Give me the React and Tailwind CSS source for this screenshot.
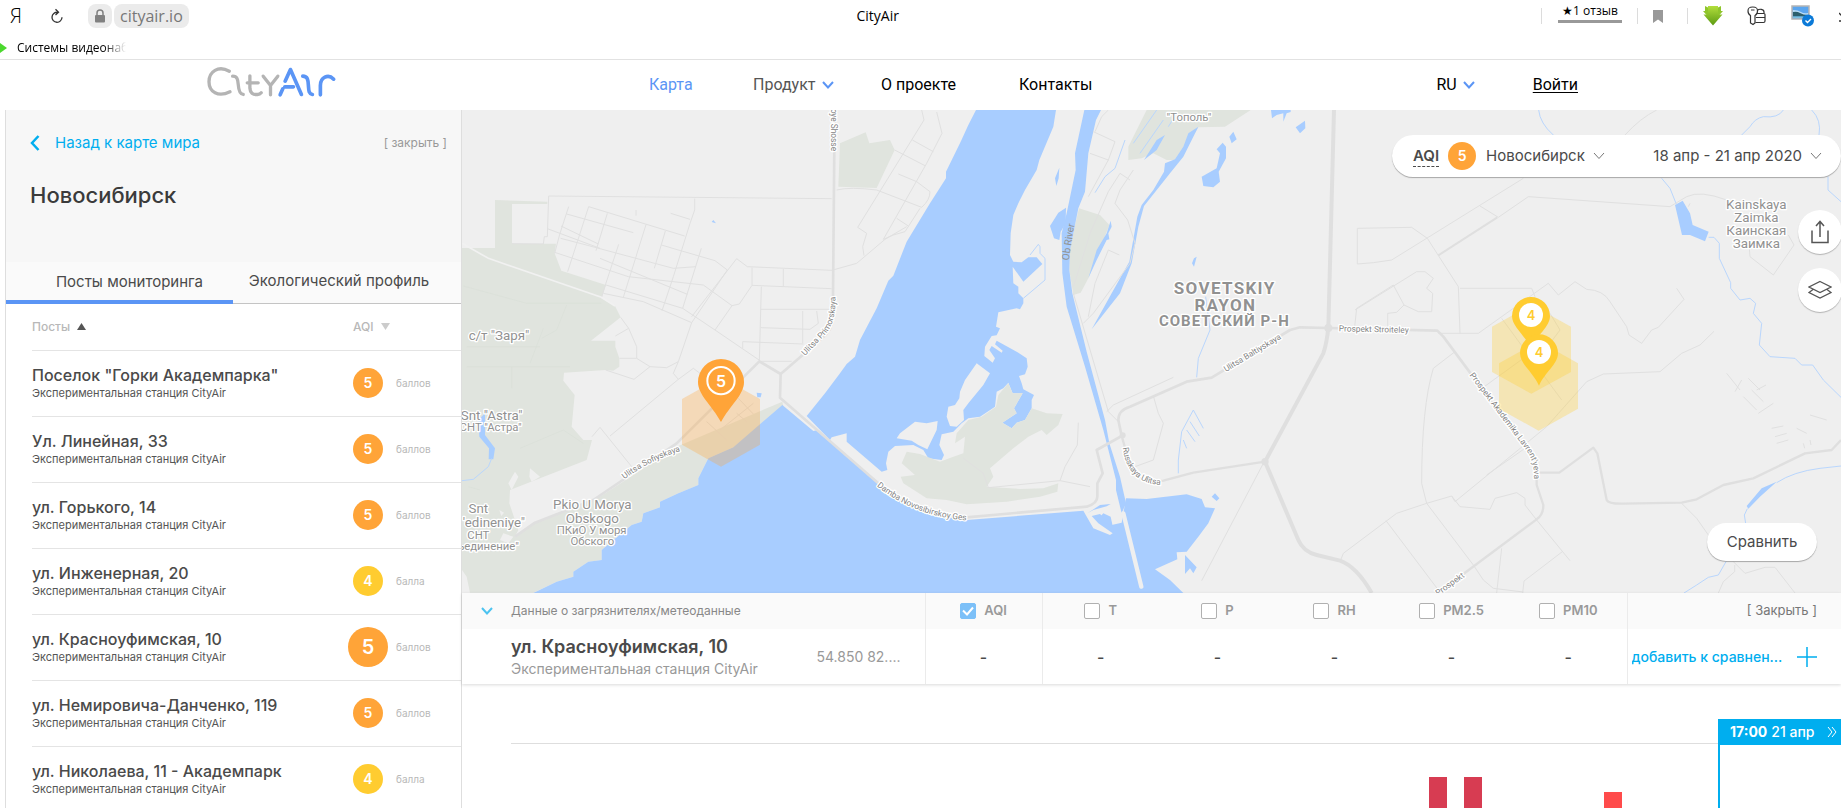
import React from 'react';
import clsx from 'clsx';

const posts = [
  { name: 'Поселок "Горки Академпарка"', aqi: 5 },
  { name: 'Ул. Линейная, 33', aqi: 5 },
  { name: 'ул. Горького, 14', aqi: 5 },
  { name: 'ул. Инженерная, 20', aqi: 4 },
  { name: 'ул. Красноуфимская, 10', aqi: 5, selected: true },
  { name: 'ул. Немировича-Данченко, 119', aqi: 5 },
  { name: 'ул. Николаева, 11 - Академпарк', aqi: 4 },
];

const params = [
  { id: 'aqi', label: 'AQI', checked: true },
  { id: 't', label: 'T' },
  { id: 'p', label: 'P' },
  { id: 'rh', label: 'RH' },
  { id: 'pm25', label: 'PM2.5' },
  { id: 'pm10', label: 'PM10' },
];

// 0 = no data
const bars = [
  { h: 31, color: '#d73c52' },
  { h: 31, color: '#d73c52' },
  { h: 0 },
  { h: 0 },
  { h: 0 },
  { h: 16, color: '#ff4b4b' },
  { h: 0 },
  { h: 0 },
];

const streetLabels = [
  { id: 'primorskaya', text: 'Ulitsa Primorskaya', d: 'M1035 768L1090 710Q1130 670 1126 590' },
  { id: 'damba', text: 'Damba Novosibirskoy Ges', d: 'M1250 1158Q1370 1255 1540 1262' },
  { id: 'russkaya', text: 'Russkaya Ulitsa', d: 'M1988 1043Q2004 1160 2120 1154' },
  { id: 'lavrentyeva', text: "Prospekt Akademika Lavrent'yeva", d: 'M3028 826L3195 1046Q3225 1080 3222 1140' },
  { id: 'sofiyskaya', text: 'Ulitsa Sofiyskaya', d: 'M494 1138Q560 1085 660 1054' },
  { id: 'baltiyskaya', text: 'Ulitsa Baltiyskaya', d: 'M2298 816L2480 706' },
  { id: 'stroiteley', text: 'Prospekt Stroiteley', d: 'M2636 694L2860 699' },
  { id: 'prospekt', text: 'Prospekt', d: 'M2934 1488L3040 1412' },
  { id: 'shosse', text: 'oye Shosse', d: 'M1112 26V180' },
];

function Chevron({ className }) {
  return (
    <svg viewBox="0 0 12 8" className={className} fill="none" stroke="currentColor">
      <path d="M1 1l5 5.5L11 1" />
    </svg>
  );
}

function AqiBadge({ value, className }) {
  return (
    <span
      className={clsx(
        'flex items-center justify-center rounded-full font-semibold text-white',
        value === 5 ? 'bg-[#ffa438]' : 'bg-[#ffcc30]',
        className
      )}
    >
      {value}
    </span>
  );
}

function BrowserBar() {
  return (
    <div className="h-[60px] overflow-hidden border-b border-[#e2e2e2] bg-white font-['Open_Sans',sans-serif]">
      <div className="grid h-8 grid-cols-[10fr_auto_11fr] items-center">
        <div className="flex items-center pl-[10px]">
          <span className="w-10 text-xl leading-6 font-light text-black">Я</span>
          <button aria-label="Обновить" className="mr-6">
            <svg viewBox="0 0 14 16" className="h-4 w-[14px]" fill="none" stroke="#333" strokeWidth="1.3">
              <path d="M7.500 4.300A5 5 0 1 0 12 9.300M5.500 1.200L8.500 4.300 5.500 7" />
            </svg>
          </button>
          <span className="flex h-6 w-6 items-center justify-center rounded-lg bg-[#ebebeb]">
            <svg viewBox="0 0 12 14" className="h-[14px] w-3">
              <rect x="1" y="6" width="10" height="7.5" rx="1" fill="#808080" />
              <path d="M3 6.5V4a3 3 0 0 1 6 0v2.500" fill="none" stroke="#808080" strokeWidth="1.5" />
            </svg>
          </span>
          <span className="ml-[2px] h-6 rounded-lg bg-[#ebebeb] px-[6px] text-base leading-6 text-[#777]">cityair.io</span>
        </div>
        <span className="text-sm text-black">CityAir</span>
        <div className="-mr-3 flex items-center justify-end">
          <span className="mr-4 h-4 w-px bg-[#dcdcdc]" />
          <a href="#reviews" className="-mt-2 w-16 border-b-[3px] border-[#999] text-center text-xs leading-[18px] text-black">
            ★1 отзыв
          </a>
          <span className="mx-[15px] h-4 w-px bg-[#dcdcdc]" />
          <button aria-label="Закладка">
            <svg viewBox="0 0 10 13" className="h-[13px] w-[10px]">
              <path d="M0 0h10v13L5 9.500 0 13z" fill="#999" />
            </svg>
          </button>
          <span className="mr-[15px] ml-[24px] h-4 w-px bg-[#dcdcdc]" />
          <button aria-label="Загрузки">
            <svg viewBox="0 0 20 20" className="h-5 w-5">
              <defs>
                <linearGradient id="arrow" x1="0" y1="0" x2="0" y2="1">
                  <stop offset="0" stopColor="#b2de3c" />
                  <stop offset="1" stopColor="#5c9a12" />
                </linearGradient>
              </defs>
              <path d="M2 0L5 1.500V0h10v1.500L18 0v5h2l-4 4.500H4L0 5h2z" fill="#8fc52b" />
              <path d="M5 0h10v8.500h4.500L10 19.500.5 8.500H5z" fill="url(#arrow)" />
            </svg>
          </button>
          <button aria-label="Пароли" className="ml-6">
            <svg viewBox="0 0 20 20" className="h-5 w-5" fill="none" stroke="#333" strokeWidth="1.2">
              <path d="M3.500 9.500C1.500 8.500 1 7 1 5c0-3 1-4 4.800-4s4.700 1 4.700 4c0 2-.5 3.500-2.500 4.500V17l-2 1.500-2.500-1.500zM4 4h3.500" />
              <path d="M10.500 4.500c1.500-2 6.500-1.500 6.500 1.500v1.500M9.500 7.500H17q1 0 1 1V15q0 1.500-1.500 1.500H8.500M9 11.500h9" />
            </svg>
          </button>
          <button aria-label="Снимки" className="ml-6">
            <svg viewBox="0 0 24 22" className="h-[22px] w-6">
              <rect x="1" y="1" width="17" height="13" fill="#5aa5ee" stroke="#b5b5b5" strokeWidth="1.500" />
              <path d="M2 5q5 0 8 2t7 1v3H2z" fill="#b9dcf7" />
              <path d="M2 7q4-1 7 1t8 2v1.500H2z" fill="#2d5f6c" />
              <path d="M2 11.500h15V13H2z" fill="#7cc0de" />
              <circle cx="17" cy="15.500" r="6" fill="#0b7ad8" />
              <path d="M14.500 15.500l2 2 3.500-3.500" fill="none" stroke="#fff" strokeWidth="1.400" />
            </svg>
          </button>
          <button aria-label="Ещё" className="ml-6">
            <svg viewBox="0 0 14 12" className="h-3 w-[14px]" fill="none" stroke="#333" strokeWidth="1.300">
              <path d="M0 3l5 5M0 11h14" />
            </svg>
          </button>
        </div>
      </div>
      <div className="flex items-center gap-[10px]">
        <svg viewBox="0 0 7 10" className="h-[10px] w-[7px]">
          <path d="M0 0l7 5-7 5z" fill="#4bd82e" />
        </svg>
        <a
          href="#bookmark"
          className="w-[109px] overflow-hidden bg-linear-to-r from-black from-80% to-transparent bg-clip-text text-xs leading-8 whitespace-nowrap text-transparent"
        >
          Системы видеонаб
        </a>
      </div>
    </div>
  );
}

function Logo() {
  return (
    <svg viewBox="618 195 394 98" className="h-[33px] w-[131px]" fill="none" strokeWidth="10" strokeLinecap="round" strokeLinejoin="round">
      <g stroke="#b4b4b4">
        <path d="M688 213C655 195 627 214 627 245S655 292 690 275" />
        <path d="M698 228C712 228 714 238 715 253S718 282 730 283" />
        <path d="M750 227V264Q751 285 773 283Q780 283 784 278M742 248H775" />
        <path d="M790 228L812 256L834 228M812 256V284" />
      </g>
      <g stroke="#5b95f5" strokeWidth="11">
        <path d="M856 243L872 208L905 283M855 260H881M841 284L849 266" />
        <path d="M909 228C924 228 925 240 926 256S927 281 938 283" />
        <path d="M962 284V256C962 232 985 219 1002 237" />
      </g>
    </svg>
  );
}

function Header() {
  return (
    <header className="flex h-[50px] items-center bg-white pr-[263px] pl-[206px] font-[Roboto,sans-serif] text-base text-black">
      <a href="#home" aria-label="CityAir" className="-mt-2 shrink-0">
        <Logo />
      </a>
      <nav className="ml-[312px] flex items-center whitespace-nowrap">
        <a href="#map" className="w-[104px] text-[#5b95f5]">Карта</a>
        <a href="#product" className="flex w-32 items-center gap-[6px] text-[#555]">
          Продукт <Chevron className="h-2 w-3 stroke-2 text-[#5b95f5]" />
        </a>
        <a href="#about" className="w-[138px]">О проекте</a>
        <a href="#contacts">Контакты</a>
      </nav>
      <button className="mr-[58px] ml-auto flex items-center gap-[6px]">
        RU <Chevron className="h-2 w-3 stroke-2 text-[#5b95f5]" />
      </button>
      <a href="#login" className="underline underline-offset-2">Войти</a>
    </header>
  );
}

function Sidebar() {
  return (
    <aside className="ml-[5px] w-[457px] shrink-0 border-x border-[#dedede] bg-white">
      <div className="h-[152px] bg-[#f7f7f7] px-6 pt-[21px]">
        <div className="flex items-center">
          <a href="#world" className="flex items-center gap-[15px] text-[15px] leading-6 text-[#00aeef]">
            <svg viewBox="0 0 10 16" className="h-4 w-[10px]" fill="none" stroke="currentColor" strokeWidth="2.500">
              <path d="M8.500 1L2 8l6.500 7" />
            </svg>
            Назад к карте мира
          </a>
          <button className="mr-[-10px] ml-auto text-xs text-[#999]">[ закрыть ]</button>
        </div>
        <h1 className="mt-6 text-[22px] leading-8 font-medium text-[#3b3b3b]">Новосибирск</h1>
      </div>
      <div className="flex h-[42px] border-b border-[#c4c4c4] bg-[#fafafa] text-[15px] text-[#4a4a4a]">
        <button className="-mb-px w-[227px] border-b-4 border-[#5b95f5] pt-[2px] pl-5">Посты мониторинга</button>
        <button className="flex-1 pr-4 pb-[2px]">Экологический профиль</button>
      </div>
      <table className="ml-[26px] w-[429px] table-fixed border-collapse">
        <colgroup>
          <col className="w-[311px]" />
          <col className="w-[50px]" />
          <col />
        </colgroup>
        <thead>
          <tr className="h-[46px] border-b border-[#e4e4e4] text-left text-xs text-[#b8b8b8]">
            <th className="font-medium">
              <button className="flex items-center gap-[7px]">
                Посты
                <svg viewBox="0 0 9 7" className="h-[7px] w-[9px]"><path d="M4.500 0L9 7H0z" fill="#555" /></svg>
              </button>
            </th>
            <th colSpan={2} className="pl-[10px] font-medium">
              <button className="flex items-center gap-[7px]">
                AQI
                <svg viewBox="0 0 9 7" className="h-[7px] w-[9px]"><path d="M0 0h9L4.500 7z" fill="#ccc" /></svg>
              </button>
            </th>
          </tr>
        </thead>
        <tbody>
          {posts.map(p => (
            <tr key={p.name} className="h-[66px] border-b border-[#e4e4e4] whitespace-nowrap">
              <td>
                <div className="text-base leading-5 font-medium text-[#4a4a4a]">{p.name}</div>
                <div className="text-[11px] leading-4 text-[#555]">Экспериментальная станция CityAir</div>
              </td>
              <td>
                <AqiBadge value={p.aqi} className={clsx('mx-auto', p.selected ? 'size-10 text-xl' : 'size-[30px] text-sm')} />
              </td>
              <td className="pl-[3px] text-[10px] text-[#b8b8b8]">{p.aqi === 5 ? 'баллов' : 'балла'}</td>
            </tr>
          ))}
        </tbody>
      </table>
    </aside>
  );
}

function MapCanvas() {
  return (
    <svg viewBox="6 30 4137 1449" preserveAspectRatio="xMidYMid slice" className="block h-full w-full" fill="none">
      <defs>
        {streetLabels.map(l => (
          <path key={l.id} id={l.id} d={l.d} />
        ))}
      </defs>
      <rect x="0" y="0" width="4200" height="1500" fill="#efefef" />

      {/* forests */}
      <g fill="#e0e4de">
        <path d="M10 444H105V300L262 305V312H156V431H288L284 460L304 512L438 555L424 595L465 618L482 652L393 722H466V740L478 775V800L460 812L437 810L312 818L310 842L344 885L335 980L370 1020L396 1020L380 1080L150 1170L148 1210L175 1290L165 1310L225 1268L420 1190L650 1040L967 905L970 920L820 1042L745 1075L715 1135L715 1155L655 1180L600 1205L600 1222L550 1240L545 1265L515 1275L460 1320L425 1350V1380L385 1385L340 1415V1430L290 1445L220 1478H30L20 1430L6 1410V444Z" />
        <path d="M1140 130L1217 97L1228 130L1290 120L1304 150L1250 264L1135 260Z" />
      </g>
      <g transform="translate(1140 0)" fill="#e0e4de">
        <path d="M920 30H1232L1155 80L1075 82L1040 140L1005 180H980L940 160L905 175L865 180V140Z" />
        <path d="M717 325L780 345L808 375L745 535L722 578L700 585L688 510L690 440Z" />
      </g>
      <g fill="#efefef">
        <path d="M165 1115L175 1130L155 1170L145 1150ZM210 1105L240 1130L215 1145L208 1130Z" />
        <path d="M130 1300L160 1310L145 1330L120 1320ZM118 1230L132 1238L124 1248Z" />
      </g>

      {/* water */}
      <g transform="translate(1140 0)" fill="#a8cdff">
        <path d="M408 30L385 75L362 125L318 215V235L270 310L200 425L160 527L145 542L110 625L60 720L45 770L20 792L0 820L-45 880L-100 948L-30 1020L-25 1012L20 1000L20 1025L125 1115L142 1110L138 1090L145 1055L165 1038L220 1035L250 1050L265 1075L305 1080L312 1065L298 1035L305 1003L340 995L365 970L385 955L420 950L465 920L470 875L490 865L505 848L518 880L548 880L522 925L530 940L487 968L515 985L530 968L555 960L575 925V900L582 885L550 868L545 850L537 828L555 823L563 800L560 775L535 758L470 722L465 733L488 752L485 758L455 738L448 750L465 775L458 788L433 768L435 740L455 708L470 706L480 685L468 680L475 637L530 625L540 628L550 610V595L535 580V560L520 550L518 500L550 545L607 492L590 472H565L545 487L520 485L510 465L512 400L520 345L535 310L555 270L590 210L598 180L640 80L648 30Z" />
        <path d="M-173 915L-80 993L-65 990L115 1150L190 1210L270 1245L380 1260L730 1232L760 1285L810 1305L818 1300L775 1270L755 1248L780 1242L815 1275L845 1268L858 1195L920 1197L1040 1183L1085 1197L1095 1222L1125 1225L1105 1270L1075 1310L1040 1355L1010 1357L1012 1378L945 1408L990 1440L1030 1479H-920L-850 1445L-800 1430L-800 1415L-755 1385L-715 1380V1350L-680 1320L-625 1275L-595 1265L-590 1240L-540 1222V1205L-485 1180L-425 1155V1135L-395 1075L-320 1042Z" />
        <path d="M733 30L705 160L707 210L680 340L665 400L667 520L680 620L735 800L790 990L828 1140V1170L845 1240L858 1210L840 1130L808 1030L795 960L740 755L697 580L688 510L690 450L715 325L735 275L745 160L768 60L783 30Z" />
        <path d="M678 323L655 338L630 378L642 415L658 420L662 395L677 370ZM658 203L645 235L649 258L656 235Z" />
        <path d="M1075 80L1045 100L1030 140L1005 178L975 190L972 215L940 270L905 315L892 350L868 485L815 580L755 688L840 580L875 490L895 380L912 318L990 220L1030 170Z" />
        <path d="M1158 140L1148 128L1130 148L1140 160L1130 205L1085 230L1090 258L1120 262L1140 245L1136 215L1158 175Z" />
        <path d="M1180 95L1168 110L1175 130L1190 118ZM1395 62L1367 82L1380 100L1396 85ZM1293 30L1296 55L1310 45L1330 40V65L1340 40L1352 36V30Z" />
        <path d="M812 362L800 400L770 450L745 535L770 480L800 420L808 418L805 400L815 380ZM1062 475L1056 490L1062 500L1070 470Z" />
        <path d="M950 120L975 105L950 150L912 180ZM1035 1365L1070 1402L1060 1420L1050 1405L1035 1422ZM1125 1180L1138 1195L1130 1203L1115 1190Z" />
        <path d="M742 1240L780 1215L812 1212L800 1219L760 1230ZM772 1260L790 1240L812 1250L818 1278Z" />
      </g>
      <path d="M55 960L75 940L75 1005L105 1045L100 1078H86L87 1045L58 1010Z" fill="#a8cdff" />
      <path d="M890 878L905 880L902 892H892ZM755 366L760 360L768 370Z" fill="#a8cdff" />
      <path d="M3645 315L3668 302L3690 340L3698 375L3746 395L3735 424L3690 405L3666 405ZM3860 1218L3905 1165L3950 1145L3900 1190L3865 1226Z" fill="#a8cdff" />
      <g stroke="#b9d6fd" strokeWidth="3">
        <path d="M6 1142L40 1138L85 1100L95 1075" />
        <path d="M3236 30Q3240 70 3280 105M3970 30Q3955 55 3910 50Q3885 55 3870 80L3845 105M4055 30Q4085 60 4077 105M4104 230V270L4143 305M3605 235L3630 265L3650 315M3746 412L3762 412L3778 430V475L3812 548V565L3840 600L3870 595L3887 610L3880 640L3905 670L3898 735L3930 770L4005 775L4025 795H4058L4090 840L4143 892" />
        <path d="M4143 1098L4080 1105Q4000 1115 3950 1148M3862 1226L3853 1245L3857 1270M3798 1385L3775 1425L3745 1432L3710 1455L3672 1479" />
        <path d="M2237 590L2250 690L2215 775L2210 832M2155 1120V1080L2165 995L2200 930L2230 985M2170 1020L2180 1045M2180 990L2205 1025M2190 965L2218 1008M1690 595L1755 540V475L1740 460V440L1735 433L1710 465M2090 30L2020 130M2110 60L2040 160M2150 40L2125 80M1995 120L1965 205L1935 230L1905 278" />
      </g>

      {/* islands */}
      <g transform="translate(1140 0)">
        <g fill="#efefef">
          <path d="M410 790L450 820L430 855L385 910L370 930L372 960L350 980L330 978L320 950L325 920L345 915L358 895L360 875L375 840Z" />
          <path d="M225 965L260 970L293 963L290 990L262 1048L235 1035L215 1022L170 1015L180 1000Z" />
        </g>
        <path d="M505 850L518 880L548 880L522 925L530 940L487 968L515 985L530 968L555 960L575 925L620 940L668 942L655 975L620 1005L605 990L565 1010L520 1045L450 1105L460 1130L440 1160L540 1167L610 1165L655 1150L652 1175L600 1190L500 1205L380 1213L320 1200L260 1195L190 1150L182 1130L225 1125L185 1090L200 1055L240 1062L300 1085L340 1070L370 1060L375 1010L345 1030L350 1000L385 960L425 950L468 920L475 885Z" fill="#e0e4de" />
        <path d="M850 1240L904 1460" stroke="#efefef" strokeWidth="13" strokeLinecap="round" />
      </g>

      {/* streets */}
      <g stroke="#e0e0e0" strokeWidth="3">
        <path d="M156 431L250 432L253 410H262L266 288L1115 296M704 296V330L690 370L640 530L606 632M326 320L300 400L284 460M320 342L520 398M386 320L323 515M386 320L674 408M442 340L408 452M262 386L420 445M303 378L415 432M302 415L360 430L640 505L708 500M558 374L490 592M476 433L436 555L424 595M616 393L583 505M690 358L632 340M528 330V347M724 445L668 625M604 435L765 482L802 510M284 457L505 530L730 555L816 617M420 475L682 583M438 555L668 625L765 690L900 782M430 580L550 605L695 668M802 510L695 668L655 785L640 820L655 838L450 1008M695 650L830 476L862 500L1115 511L1190 490L1275 418L1340 380M970 507V560M876 503V556L838 612L816 617L765 690M876 556L1115 566M904 560L898 782M902 628H1110M902 683L1050 688L1075 670L1070 633M1028 633V730M1030 732L848 725V745M898 784H995M482 652L506 685L530 740V775L570 800L620 803L655 785M466 708L506 685M478 775H530M437 810L522 838L570 800M420 982L515 1100M396 1010L420 982M655 838L700 805L720 820M740 965L800 1020M780 990L880 910M835 895L880 942M830 940L860 965M1130 270Q1170 260 1250 270L1385 322Q1410 300 1410 275L1370 245L1315 222M1385 30L1392 60L1193 382L1220 400L1208 440L1212 467M1430 36L1446 100L1400 190L1270 418L1300 405L1335 395L1380 325M1357 120L1420 155M1304 150L1395 197M1310 355L1345 378" />
        <path d="M1840 580L1945 935L1975 965M1870 670L1900 640L2010 490L2025 430L2003 360L1965 310L1980 270L2020 210M1840 560L1890 400L1945 275L1980 220L2010 240M1885 290L1945 180L1890 160M1900 95L1965 125L1945 180M1905 95L1925 50L1945 30M1885 650L1905 550L1945 450L1978 465M1940 935L1960 915L2140 832M2080 888L2095 940L2110 970L2080 1080L2025 1100M1855 968L1852 1035L1815 1100L1800 1142L1890 1160M1800 1142L1585 1163L1570 1120L1510 1075M2410 1090L2225 1442" />
        <path d="M3590 30Q3540 55 3495 105M3190 235L2795 480L2740 488L2692 492V385L2855 382L2902 415L2995 560L3000 700M3115 352L3060 318M3115 352L3205 290L3630 320L3680 290Q3720 270 3800 300M3685 320L3690 310M3000 565H3215L3225 590M2685 630L2870 515L2895 515L2920 535L2900 565L2918 580L2915 635H2875L2832 615L2800 555L2690 625L2684 680M2832 615L2810 637L2783 640V680M2935 700H3055L3265 550L3295 585L3345 545L3380 568Q3430 570 3450 605L3500 680L3507 705L3545 730L3575 690L3595 682L3672 598L3650 565M2985 755L2920 805Q2885 920 2885 1150L2900 1210L3040 1395L3070 1440L3100 1465L3190 1476M2900 1210L2975 1188L2985 1205L3260 980L3380 845L3430 822L3600 815L3665 760L3720 735L3762 694M2975 1188L3000 1220L3090 1228L3105 1195L3170 1178L3195 1195V1215L3230 1260L3330 1382M2900 1210L2810 1240L2650 1360L2642 1380M2778 1262L2935 1470M3125 1345L3110 1479M3307 1355L3192 1443L3188 1479M3665 1210L3710 1255L3745 1305M3820 1385L3855 1420L3915 1402H3945L4005 1479M3824 1395V1415L3790 1445L3775 1479M3070 862L3190 775L3270 730L3300 690L3270 640M3125 655L3305 900M3080 1125L3195 1045M3868 445L3870 470L3940 525L4002 435L3985 405" />
        <path d="M3800 820L3840 870M3845 840L3825 875M3865 835L3900 870M3850 890L3890 930M3875 870L3910 905M3890 870L3918 855M3895 940L3940 910M3935 985L3970 978M3945 1010L3980 1000M3950 1030L3985 1020M4010 985L4040 1000M4050 945L4100 960M4030 1030L4034 1045M4050 1020L4053 1035" />
      </g>
      <path d="M6 430L85 475L424 592L465 618" stroke="#f1f1f1" strokeWidth="5" />
      <g stroke="#dadfd8" strokeWidth="2">
        <path d="M10 558L200 610H424M320 615L290 690L245 715M210 790L250 685M20 740H240M155 800V865M20 800H330M25 1160L60 1170M180 1045L310 990L370 1030" />
      </g>

      {/* main roads */}
      <g stroke="#dfdfdf" strokeLinejoin="round">
        <path d="M1124 30L1119 590V650Q1120 690 1080 720L962 822L960 893L1255 1150Q1370 1250 1520 1252L1880 1220Q1912 1210 1912 1190V1150L1928 1120L1910 1050L1985 1008L1975 960Q1975 930 2010 920L2180 845L2255 833L2490 690L2520 682L2605 684L2932 692L2950 710L3225 1080L3230 1120M962 822L898 784L650 1030L400 1200L225 1268L165 1310" strokeWidth="8" />
        <path d="M2622 30L2605 684Q2600 730 2590 760L2415 1085L2515 1320Q2530 1355 2570 1365L2640 1382Q2690 1400 2735 1479" strokeWidth="12" />
        <path d="M1985 1008L2000 1060Q2020 1160 2110 1142L2200 1118L2415 1085" strokeWidth="7" />
        <path d="M3230 1118H3298L3400 1043L3412 1060L3440 1200Q3445 1212 3490 1211L3665 1208L3710 1198L3790 1155L3880 1135L4035 1060L4115 1050L4143 1020M3230 1118V1155L3250 1215Q3250 1245 3230 1258L3010 1422L2925 1479" strokeWidth="7" />
        <path d="M3112 352L2935 466" strokeWidth="6" />
      </g>
      <circle cx="2605" cy="684" r="12" fill="#dfdfdf" />
      <circle cx="2415" cy="1085" r="11" fill="#dfdfdf" />
      <circle cx="1988" cy="1006" r="9" fill="#dfdfdf" />

      {/* labels */}
      <g
        fill="#919191"
        stroke="#fff"
        strokeWidth="8"
        strokeLinejoin="round"
        paintOrder="stroke"
        className="font-[Roboto,sans-serif]"
      >
        <g fontSize="40" textAnchor="middle">
          <text x="117" y="720">с/т "Заря"</text>
          <text x="95" y="960">Snt "Astra"</text>
          <text x="55" y="1239">Snt</text>
          <text x="102" y="1281">'edineniye"</text>
          <text x="397" y="1227">Pkio U Morya</text>
          <text x="397" y="1269">Obskogo</text>
          <text x="3889" y="326">Kainskaya</text>
          <text x="3889" y="365">Zaimka</text>
          <text x="3889" y="404">Каинская</text>
          <text x="3889" y="443">Заимка</text>
        </g>
        <g fontSize="34" textAnchor="middle">
          <text x="92" y="993">СНТ "Астра"</text>
          <text x="55" y="1316">СНТ</text>
          <text x="84" y="1349">ъединение"</text>
          <text x="395" y="1302">ПКиО У моря</text>
          <text x="397" y="1335">Обского</text>
          <text x="2187" y="62">"Тополь"</text>
        </g>
        <g fontSize="51" textAnchor="middle" fontWeight="700" letterSpacing="4">
          <text x="2294" y="582">SOVETSKIY</text>
          <text x="2296" y="632">RAYON</text>
          <text x="2293" y="679" fontSize="45" letterSpacing="3">СОВЕТСКИЙ Р-Н</text>
        </g>
        <text transform="translate(1826 482) rotate(-81)" fontSize="30" stroke="none">Ob River</text>
      </g>
      {/* all the halo goes under the letters, else each glyph on a curve eats its neighbour */}
      <g fontSize="25" className="font-[Roboto,sans-serif]">
        {streetLabels.map(l => (
          <g key={l.id}>
            <use href={'#' + l.id} stroke="#fff" strokeWidth="0" />
            <text stroke="#fff" strokeWidth="8" strokeLinejoin="round" aria-hidden="true">
              <textPath href={'#' + l.id}>{l.text}</textPath>
            </text>
            <text fill="#858585">
              <textPath href={'#' + l.id}>{l.text}</textPath>
            </text>
          </g>
        ))}
      </g>

      {/* hexagons and pins */}
      <path d="M783 832L900 897V1034L783 1100L666 1034V897Z" fill="#ffa438" fillOpacity=".3" />
      <path d="M3214 614L3333 680V816L3214 881L3096 816V680Z" fill="#ffcc30" fillOpacity=".3" />
      <path d="M3236 724L3354 790V926L3236 992L3117 926V790Z" fill="#ffcc30" fillOpacity=".3" />
      <path d="M783 966C755 915 714 885 714 846A69 69 0 0 1 852 846C852 885 811 915 783 966Z" fill="#ffa438" />
      <circle cx="783" cy="842" r="41" stroke="#fff" strokeWidth="6" />
      <path d="M3213 745C3195 705 3156 680 3156 648A57 57 0 0 1 3270 648C3270 680 3231 705 3213 745Z" fill="#ffcc30" />
      <circle cx="3213" cy="645" r="36" fill="#fff" />
      <path d="M3237 857C3219 817 3180 792 3180 760A57 57 0 0 1 3294 760C3294 792 3255 817 3237 857Z" fill="#ffcc30" />
      <circle cx="3237" cy="756" r="36" fill="#fff" />
      <g textAnchor="middle" fontWeight="600" fontSize="39">
        <text x="783" y="860" fill="#fff" fontSize="48">5</text>
        <text x="3213" y="659" fill="#ffcc30">4</text>
        <text x="3237" y="770" fill="#ffcc30">4</text>
      </g>
    </svg>
  );
}

function MapSection() {
  return (
    <section className="relative h-[483px] shrink-0 overflow-hidden bg-[#efefef] text-[15px] text-[#4a4a4a]">
      <MapCanvas />
      <div className="absolute top-[25px] right-0 flex h-[42px] w-[449px] items-center rounded-full bg-white pr-[19px] pl-[21px] shadow-[0_1px_1px_rgba(0,0,0,0.3)]">
        <span className="border-b border-dashed border-[#4a4a4a] leading-5 font-semibold">AQI</span>
        <AqiBadge value={5} className="mr-[10px] ml-[9px] size-7 text-sm" />
        <button className="flex items-center gap-2">
          Новосибирск <Chevron className="h-2 w-3 text-[#777]" />
        </button>
        <button className="ml-auto flex items-center gap-2">
          18 апр - 21 апр 2020 <Chevron className="h-2 w-3 text-[#777]" />
        </button>
      </div>
      <div className="absolute top-[100px] -right-px flex flex-col gap-[14px]">
        <button aria-label="Поделиться" className="flex size-11 items-center justify-center rounded-full bg-white shadow-[0_1px_1px_rgba(0,0,0,0.25)]">
          <svg viewBox="0 0 18 24" className="h-6 w-[18px]" fill="none" stroke="#555" strokeWidth="1.500">
            <path d="M1 10.500V22.500h16V10.500M9 17V1.500M5 6l4-4.500L13 6" />
          </svg>
        </button>
        <button aria-label="Слои" className="flex size-11 items-center justify-center rounded-full bg-white shadow-[0_1px_1px_rgba(0,0,0,0.25)]">
          <svg viewBox="0 0 24 20" className="h-5 w-6" fill="none" stroke="#555" strokeWidth="1.300">
            <path d="M12 1.500L23 7l-11 5.500L1 7zM5 9.500l-4 3 11 5.500 11-5.500-4-3" />
          </svg>
        </button>
      </div>
      <button className="absolute right-6 bottom-8 h-[38px] w-[110px] rounded-full bg-white shadow-[0_1px_1px_rgba(0,0,0,0.3)]">
        Сравнить
      </button>
    </section>
  );
}

function ParamCheckbox({ id, label, checked }) {
  return (
    <label htmlFor={id} className="flex items-center justify-center gap-2">
      <span className="grid">
        <input
          id={id}
          type="checkbox"
          defaultChecked={checked}
          className="peer col-start-1 row-start-1 size-4 appearance-none rounded-[2px] border border-[#b0b0b0] bg-white checked:border-[#7cc0f8] checked:bg-[#7cc0f8]"
        />
        <svg viewBox="0 0 16 16" className="pointer-events-none invisible col-start-1 row-start-1 size-4 peer-checked:visible" fill="none" stroke="#fff" strokeWidth="2">
          <path d="M3 7.500l4 4L13 4.500" />
        </svg>
      </span>
      {label}
    </label>
  );
}

function DataTable() {
  return (
    <div className="relative z-10 shadow-[0_1px_3px_rgba(0,0,0,0.15)]">
      <table className="w-full table-fixed border-collapse">
        <thead>
          <tr className="h-9 bg-[#fafafa] text-[13px] text-[#999]">
            <th className="text-left font-normal">
              <div className="flex items-center gap-[18px] pl-[19px] text-xs text-[#888]">
                <button aria-label="Свернуть">
                  <Chevron className="block h-2 w-3 stroke-2 text-[#4cc3f0]" />
                </button>
                Данные о загрязнителях/метеоданные
              </div>
            </th>
            {params.map(p => (
              <th key={p.id} className={clsx('w-[117px] font-semibold', p.checked && 'border-x border-[#ebebeb]')}>
                <ParamCheckbox {...p} />
              </th>
            ))}
            <th className="w-[214px] border-l border-[#ebebeb] pr-6 text-right font-normal">
              <button className="text-[13px] text-[#777]">[ Закрыть ]</button>
            </th>
          </tr>
        </thead>
        <tbody>
          <tr className="h-[55px] bg-white">
            <td>
              <div className="flex items-center justify-between pr-6 pl-[49px]">
                <div>
                  <div className="text-lg leading-6 font-semibold text-[#4a4a4a]">ул. Красноуфимская, 10</div>
                  <div className="text-sm leading-5 text-[#999]">Экспериментальная станция CityAir</div>
                </div>
                <span className="text-sm text-[#999]">54.850 82....</span>
              </div>
            </td>
            {params.map(p => (
              <td key={p.id} className={clsx('text-center font-medium text-[#4a4a4a]', p.checked && 'border-x border-[#ebebeb]')}>-</td>
            ))}
            <td className="border-l border-[#ebebeb] pr-6 pl-1">
              <button className="flex w-full items-center justify-between text-sm font-medium text-[#00aeef]">
                <span className="max-w-[154px] truncate">добавить к сравнению</span>
                <svg viewBox="0 0 20 20" className="size-5 shrink-0" fill="none" stroke="currentColor" strokeWidth="1.500">
                  <path d="M10 0v20M0 10h20" />
                </svg>
              </button>
            </td>
          </tr>
        </tbody>
      </table>
    </div>
  );
}

function Chart() {
  return (
    <div className="flex flex-1 items-stretch bg-white pt-[35px] pl-[49px]">
      <div className="mt-6 flex flex-1 items-end justify-end border-t border-[#dedede] pr-[18px]">
        {bars.map((b, i) => (
          <div key={i} className="flex w-[35px] justify-center">
            <div className="w-[18px]" style={{ height: b.h, backgroundColor: b.color }} />
          </div>
        ))}
      </div>
      <div className="w-[123px] border-l-2 border-[#00aeef]">
        <div className="flex h-[26px] items-center gap-1 bg-[#00aeef] pl-[10px] text-sm whitespace-nowrap text-white">
          <b className="font-bold">17:00</b>
          <span className="font-medium">21 апр</span>
          <svg viewBox="0 0 10 12" className="mr-1 ml-auto h-3 w-[10px]" fill="none" stroke="currentColor">
            <path d="M1 1l4 5-4 5M5 1l4 5-4 5" />
          </svg>
        </div>
      </div>
    </div>
  );
}

export default function App() {
  return (
    <div className="flex h-screen flex-col overflow-hidden bg-white font-[Inter,sans-serif]">
      <BrowserBar />
      <Header />
      <div className="flex min-h-0 flex-1">
        <Sidebar />
        <main className="flex min-w-0 flex-1 flex-col">
          <MapSection />
          <DataTable />
          <Chart />
        </main>
      </div>
    </div>
  );
}
